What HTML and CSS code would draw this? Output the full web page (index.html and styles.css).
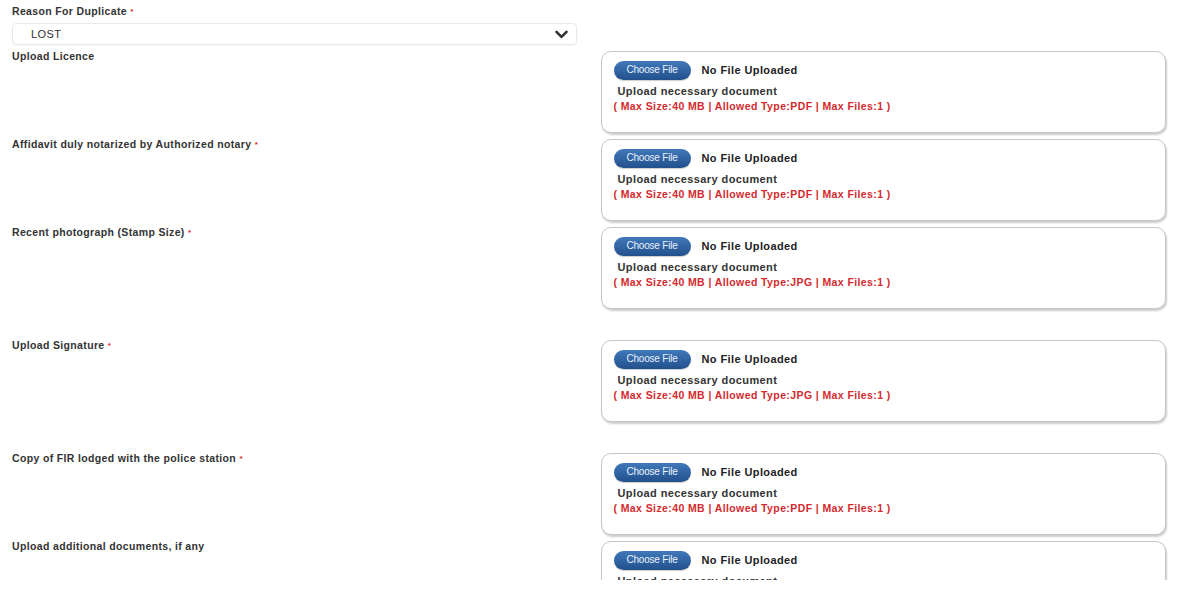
FILE: index.html
```html
<!DOCTYPE html>
<html>
<head>
<meta charset="utf-8">
<link rel="stylesheet" href="styles.css">
</head>
<body>
<div class="page">
  <div class="form">
    <div class="select-field">
      <label class="lbl">Reason For Duplicate <span class="req">*</span></label>
      <div class="select">
        <span>LOST</span>
        <svg class="chev" width="13" height="9" viewBox="0 0 13 9"><path d="M1.5 1.8 L6.5 6.8 L11.5 1.8" fill="none" stroke="#333" stroke-width="2.6" stroke-linecap="round" stroke-linejoin="round"/></svg>
      </div>
    </div>

    <div class="row">
      <div class="lbl">Upload Licence</div>
      <div class="upload">
        <div class="file-line"><span class="btn">Choose File</span><span class="nofile">No File Uploaded</span></div>
        <div class="hint">Upload necessary document</div>
        <div class="limits">( Max Size:40 MB | Allowed Type:PDF | Max Files:1 )</div>
      </div>
    </div>

    <div class="row">
      <div class="lbl">Affidavit duly notarized by Authorized notary <span class="req">*</span></div>
      <div class="upload">
        <div class="file-line"><span class="btn">Choose File</span><span class="nofile">No File Uploaded</span></div>
        <div class="hint">Upload necessary document</div>
        <div class="limits">( Max Size:40 MB | Allowed Type:PDF | Max Files:1 )</div>
      </div>
    </div>

    <div class="row tall">
      <div class="lbl">Recent photograph (Stamp Size) <span class="req">*</span></div>
      <div class="upload">
        <div class="file-line"><span class="btn">Choose File</span><span class="nofile">No File Uploaded</span></div>
        <div class="hint">Upload necessary document</div>
        <div class="limits">( Max Size:40 MB | Allowed Type:JPG | Max Files:1 )</div>
      </div>
    </div>

    <div class="row tall">
      <div class="lbl">Upload Signature <span class="req">*</span></div>
      <div class="upload">
        <div class="file-line"><span class="btn">Choose File</span><span class="nofile">No File Uploaded</span></div>
        <div class="hint">Upload necessary document</div>
        <div class="limits">( Max Size:40 MB | Allowed Type:JPG | Max Files:1 )</div>
      </div>
    </div>

    <div class="row">
      <div class="lbl">Copy of FIR lodged with the police station <span class="req">*</span></div>
      <div class="upload">
        <div class="file-line"><span class="btn">Choose File</span><span class="nofile">No File Uploaded</span></div>
        <div class="hint">Upload necessary document</div>
        <div class="limits">( Max Size:40 MB | Allowed Type:PDF | Max Files:1 )</div>
      </div>
    </div>

    <div class="row">
      <div class="lbl">Upload additional documents, if any</div>
      <div class="upload">
        <div class="file-line"><span class="btn">Choose File</span><span class="nofile">No File Uploaded</span></div>
        <div class="hint">Upload necessary document</div>
        <div class="limits">( Max Size:40 MB | Allowed Type:PDF | Max Files:1 )</div>
      </div>
    </div>
  </div>
</div>
</body>
</html>
```

FILE: styles.css
```css
html, body {
  margin: 0;
  padding: 0;
  background: #ffffff;
}
body {
  font-family: "Liberation Sans", Arial, sans-serif;
  color: #333333;
}
.page {
  height: 580px;
  overflow: hidden;
  background: #ffffff;
}
.form {
  padding: 6px 34px 0 12px;
}
.lbl {
  display: block;
  font-size: 10.5px;
  font-weight: bold;
  letter-spacing: 0.35px;
  color: #333;
  line-height: 11px;
}
.req {
  color: #d9262a;
  font-size: 8px;
  vertical-align: top;
}
.select-field {
  width: 565px;
}
.select-field .lbl {
  margin-bottom: 6px;
}
.select {
  height: 22px;
  border: 1px solid #e9e9e9;
  border-radius: 4px;
  box-sizing: border-box;
  display: flex;
  align-items: center;
  justify-content: space-between;
  padding: 0 8px 0 18px;
  font-size: 11px;
  letter-spacing: 0.4px;
  color: #333;
  box-shadow: 0 1px 2px rgba(0,0,0,0.04);
}
.chev {
  display: block;
}
.row {
  display: grid;
  grid-template-columns: 1fr 1fr;
  column-gap: 23px;
  margin-top: 6px;
}
.row .lbl {
  padding-top: 0;
}
.row.tall {
  margin-bottom: 31px;
}
.upload {
  height: 82px;
  box-sizing: border-box;
  border: 1px solid #c6c6c6;
  border-radius: 10px;
  box-shadow: 1px 2px 2px rgba(0,0,0,0.2);
  padding: 8px 12px 0 12px;
  background: #fff;
}
.file-line {
  display: flex;
  align-items: center;
  gap: 11px;
  height: 20px;
}
.btn {
  display: inline-block;
  width: 77px;
  height: 19px;
  line-height: 18px;
  text-align: center;
  border-radius: 10px;
  background: linear-gradient(#4079bb, #22508c);
  color: #eaf1fb;
  font-size: 10px;
  letter-spacing: -0.2px;
  box-shadow: 0 1px 1px rgba(0,0,0,0.2);
}
.nofile {
  font-size: 11px;
  font-weight: bold;
  letter-spacing: 0.4px;
  color: #222;
}
.hint {
  font-size: 11px;
  font-weight: bold;
  letter-spacing: 0.4px;
  color: #333;
  margin-top: 4px;
  padding-left: 4px;
  line-height: 14px;
}
.limits {
  font-size: 10.5px;
  font-weight: bold;
  letter-spacing: 0.4px;
  color: #d42a2e;
  line-height: 14px;
  margin-top: 1px;
}
```
